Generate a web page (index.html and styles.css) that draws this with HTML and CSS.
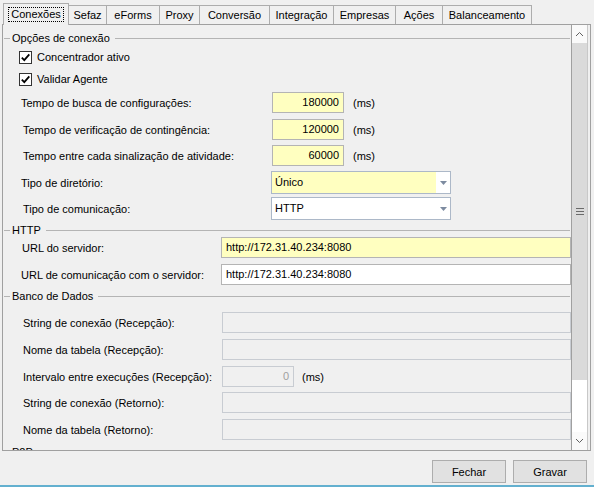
FILE: index.html
```html
<!DOCTYPE html>
<html lang="pt">
<head>
<meta charset="utf-8">
<title>Conexões</title>
<link rel="stylesheet" href="styles.css">
</head>
<body>
<div class="window">
  <div class="tabs">
    <div class="tab active t-conexoes"><span class="focus">Conexões</span></div>
    <div class="tab t-sefaz">Sefaz</div>
    <div class="tab t-eforms">eForms</div>
    <div class="tab t-proxy">Proxy</div>
    <div class="tab t-conversao">Conversão</div>
    <div class="tab t-integracao">Integração</div>
    <div class="tab t-empresas">Empresas</div>
    <div class="tab t-acoes">Ações</div>
    <div class="tab t-balanceamento">Balanceamento</div>
  </div>
  <div class="panel">
    <div class="content">
      <div class="ghead mt7"><span class="dash"></span><span class="gtitle">Opções de conexão</span><span class="gline"></span></div>
      <div class="check mt6"><span class="box"><svg width="11" height="11" viewBox="0 0 11 11"><path d="M1.8 5.6 L4.3 8.1 L9.3 2.4" fill="none" stroke="#000" stroke-width="1.8"/></svg></span>Concentrador ativo</div>
      <div class="check mt8"><span class="box"><svg width="11" height="11" viewBox="0 0 11 11"><path d="M1.8 5.6 L4.3 8.1 L9.3 2.4" fill="none" stroke="#000" stroke-width="1.8"/></svg></span>Validar Agente</div>

      <div class="row row-num mt6"><span class="lbl in18">Tempo de busca de configurações:</span><span class="field num yellow">180000</span><span class="unit">(ms)</span></div>
      <div class="row row-num mt6"><span class="lbl">Tempo de verificação de contingência:</span><span class="field num yellow">120000</span><span class="unit">(ms)</span></div>
      <div class="row row-num mt5"><span class="lbl">Tempo entre cada sinalização de atividade:</span><span class="field num yellow">60000</span><span class="unit">(ms)</span></div>
      <div class="row row-sel mt5"><span class="lbl in18">Tipo de diretório:</span><span class="select"><span class="val yellow">Único</span><span class="arrow"><svg width="7" height="4" viewBox="0 0 7 4"><path d="M0 0 H7 L3.5 4 Z" fill="#7d8ba0"/></svg></span></span></div>
      <div class="row row-sel mt3"><span class="lbl">Tipo de comunicação:</span><span class="select"><span class="val">HTTP</span><span class="arrow"><svg width="7" height="4" viewBox="0 0 7 4"><path d="M0 0 H7 L3.5 4 Z" fill="#7d8ba0"/></svg></span></span></div>

      <div class="ghead mt4"><span class="dash"></span><span class="gtitle">HTTP</span><span class="gline"></span></div>
      <div class="row row-url mt1"><span class="lbl in19">URL do servidor:</span><span class="field yellow">http://172.31.40.234:8080</span></div>
      <div class="row row-url mt6"><span class="lbl in18">URL de comunicação com o servidor:</span><span class="field">http://172.31.40.234:8080</span></div>

      <div class="ghead mt5"><span class="dash"></span><span class="gtitle">Banco de Dados</span><span class="gline"></span></div>
      <div class="row row-db mt10"><span class="lbl">String de conexão (Recepção):</span><span class="field disabled"></span></div>
      <div class="row row-db mt6"><span class="lbl">Nome da tabela (Recepção):</span><span class="field disabled"></span></div>
      <div class="row row-int mt6"><span class="lbl">Intervalo entre execuções (Recepção):</span><span class="field num disabled">0</span><span class="unit u8">(ms)</span></div>
      <div class="row row-db mt5"><span class="lbl">String de conexão (Retorno):</span><span class="field disabled"></span></div>
      <div class="row row-db mt6"><span class="lbl">Nome da tabela (Retorno):</span><span class="field disabled"></span></div>

      <div class="ghead mt6"><span class="dash"></span><span class="gtitle">P2P</span><span class="gline"></span></div>
    </div>
    <div class="scrollbar">
      <div class="sb-btn"><svg width="9" height="6" viewBox="0 0 9 6"><path d="M1 5 L4.5 1.5 L8 5" fill="none" stroke="#606060" stroke-width="1"/></svg></div>
      <div class="thumb"><svg width="8" height="7" viewBox="0 0 8 7"><path d="M0 0.5 H8 M0 3.5 H8 M0 6.5 H8" stroke="#6a6a6a" stroke-width="1"/></svg></div>
      <div class="track"></div>
      <div class="sb-btn"><svg width="9" height="6" viewBox="0 0 9 6"><path d="M1 1 L4.5 4.5 L8 1" fill="none" stroke="#606060" stroke-width="1"/></svg></div>
    </div>
  </div>
  <div class="actions">
    <button class="btn">Fechar</button>
    <button class="btn">Gravar</button>
  </div>
  <div class="frame-line"></div>
</div>
</body>
</html>
```

FILE: styles.css
```css
* { box-sizing: border-box; }
html, body { margin: 0; padding: 0; }
body {
  width: 594px;
  height: 487px;
  overflow: hidden;
  background: #f0f0f0;
  font-family: "Liberation Sans", Arial, sans-serif;
  font-size: 11px;
  color: #000;
}
.window { display: flex; flex-direction: column; height: 487px; }

/* Tabs */
.tabs {
  display: flex;
  align-items: flex-end;
  height: 24px;
  padding-left: 3px;
  position: relative;
  z-index: 1;
}
.tab {
  height: 19px;
  border: 1px solid #adadad;
  border-bottom: none;
  margin-right: -1px;
  display: flex;
  align-items: center;
  justify-content: center;
  background: #f0f0f0;
  line-height: 13px;
  white-space: nowrap;
}
.tab.active { height: 22px; margin-bottom: -1px; background: #f0f0f0; }
.focus { border: 1px dotted #000; padding: 0 2px; height: 15px; line-height: 13px; width: 56px; text-align: center; }
.t-conexoes { width: 66px; }
.t-sefaz { width: 39px; }
.t-eforms { width: 54px; }
.t-proxy { width: 41px; }
.t-conversao { width: 71px; }
.t-integracao { width: 65px; }
.t-empresas { width: 63px; }
.t-acoes { width: 48px; }
.t-balanceamento { width: 90px; }

/* Panel */
.panel {
  margin-left: 2px;
  width: 589px;
  height: 427px;
  border: 1px solid #a0a0a0;
  display: flex;
  padding-right: 2px;
  background: #f0f0f0;
}
.content {
  flex: 1;
  overflow: hidden;
  display: flex;
  flex-direction: column;
}

.mt1 { margin-top: 1px; }
.mt3 { margin-top: 3px; }
.mt4 { margin-top: 4px; }
.mt5 { margin-top: 5px; }
.mt6 { margin-top: 6px; }
.mt7 { margin-top: 7px; }
.mt8 { margin-top: 8px; }
.mt10 { margin-top: 10px; }

/* Group header */
.ghead { display: flex; align-items: center; height: 12px; flex: none; }
.dash { width: 6px; margin-left: 1px; border-top: 1px solid #b4b4b4; }
.gtitle { padding: 0 5px 0 2px; line-height: 12px; white-space: nowrap; }
.gline { flex: 1; border-top: 1px solid #b4b4b4; margin-right: 1px; }

/* Checkbox */
.check { display: flex; align-items: center; height: 14px; padding-left: 16px; flex: none; }
.box {
  width: 13px; height: 13px;
  border: 1px solid #333;
  background: #fff;
  margin-right: 5px;
  display: flex; align-items: center; justify-content: center;
}

/* Rows */
.row { display: grid; align-items: center; height: 21px; flex: none; }
.row-num { grid-template-columns: 269px 72px auto; }
.row-sel { grid-template-columns: 268px 180px; height: 23px; }
.row-url { grid-template-columns: 218px 1fr; }
.row-db { grid-template-columns: 219px 1fr; }
.row-int { grid-template-columns: 219px 72px auto; }
.lbl { padding-left: 20px; white-space: nowrap; }
.lbl.in18 { padding-left: 18px; }
.lbl.in19 { padding-left: 19px; }

.field {
  height: 21px;
  border: 1px solid #b4b4b4;
  background: #fff;
  line-height: 19px;
  padding: 0 4px;
  white-space: nowrap;
  overflow: hidden;
}
.field.num { text-align: right; }
.yellow { background: #ffffc0; }
.field.yellow { background: #ffffc0; }
.field.disabled { background: #f0f0f0; border-color: #c8ccd2; color: #a0a0a0; }
.unit { margin-left: 9px; }
.unit.u8 { margin-left: 8px; }

.select {
  display: flex;
  height: 23px;
  border: 1px solid #acb8c8;
  background: #fff;
}
.select .val { flex: 1; padding-left: 3px; line-height: 21px; }
.select .arrow { width: 14px; display: flex; align-items: center; justify-content: center; background: #fff; }

/* Scrollbar */
.scrollbar {
  width: 17px;
  border-left: 1px solid #a0a0a0;
  border-right: 1px solid #c8c8c8;
  display: flex;
  flex-direction: column;
  background: #fff;
}
.sb-btn { height: 18px; display: flex; align-items: center; justify-content: center; background: #fafafa; flex: none; }
.thumb { height: 337px; background: #dadada; display: flex; align-items: center; justify-content: center; flex: none; }
.track { flex: 1; background: #fff; }

/* Buttons */
.actions { display: flex; justify-content: flex-end; gap: 7px; padding-right: 7px; margin-top: 9px; }
.btn {
  width: 74px; height: 23px;
  background: #e1e1e1;
  border: 1px solid #adadad;
  font-family: "Liberation Sans", Arial, sans-serif;
  font-size: 11px;
  color: #000;
  padding: 0;
}
.frame-line { height: 2px; margin-top: 2px; background: #63b0cf; }
```
